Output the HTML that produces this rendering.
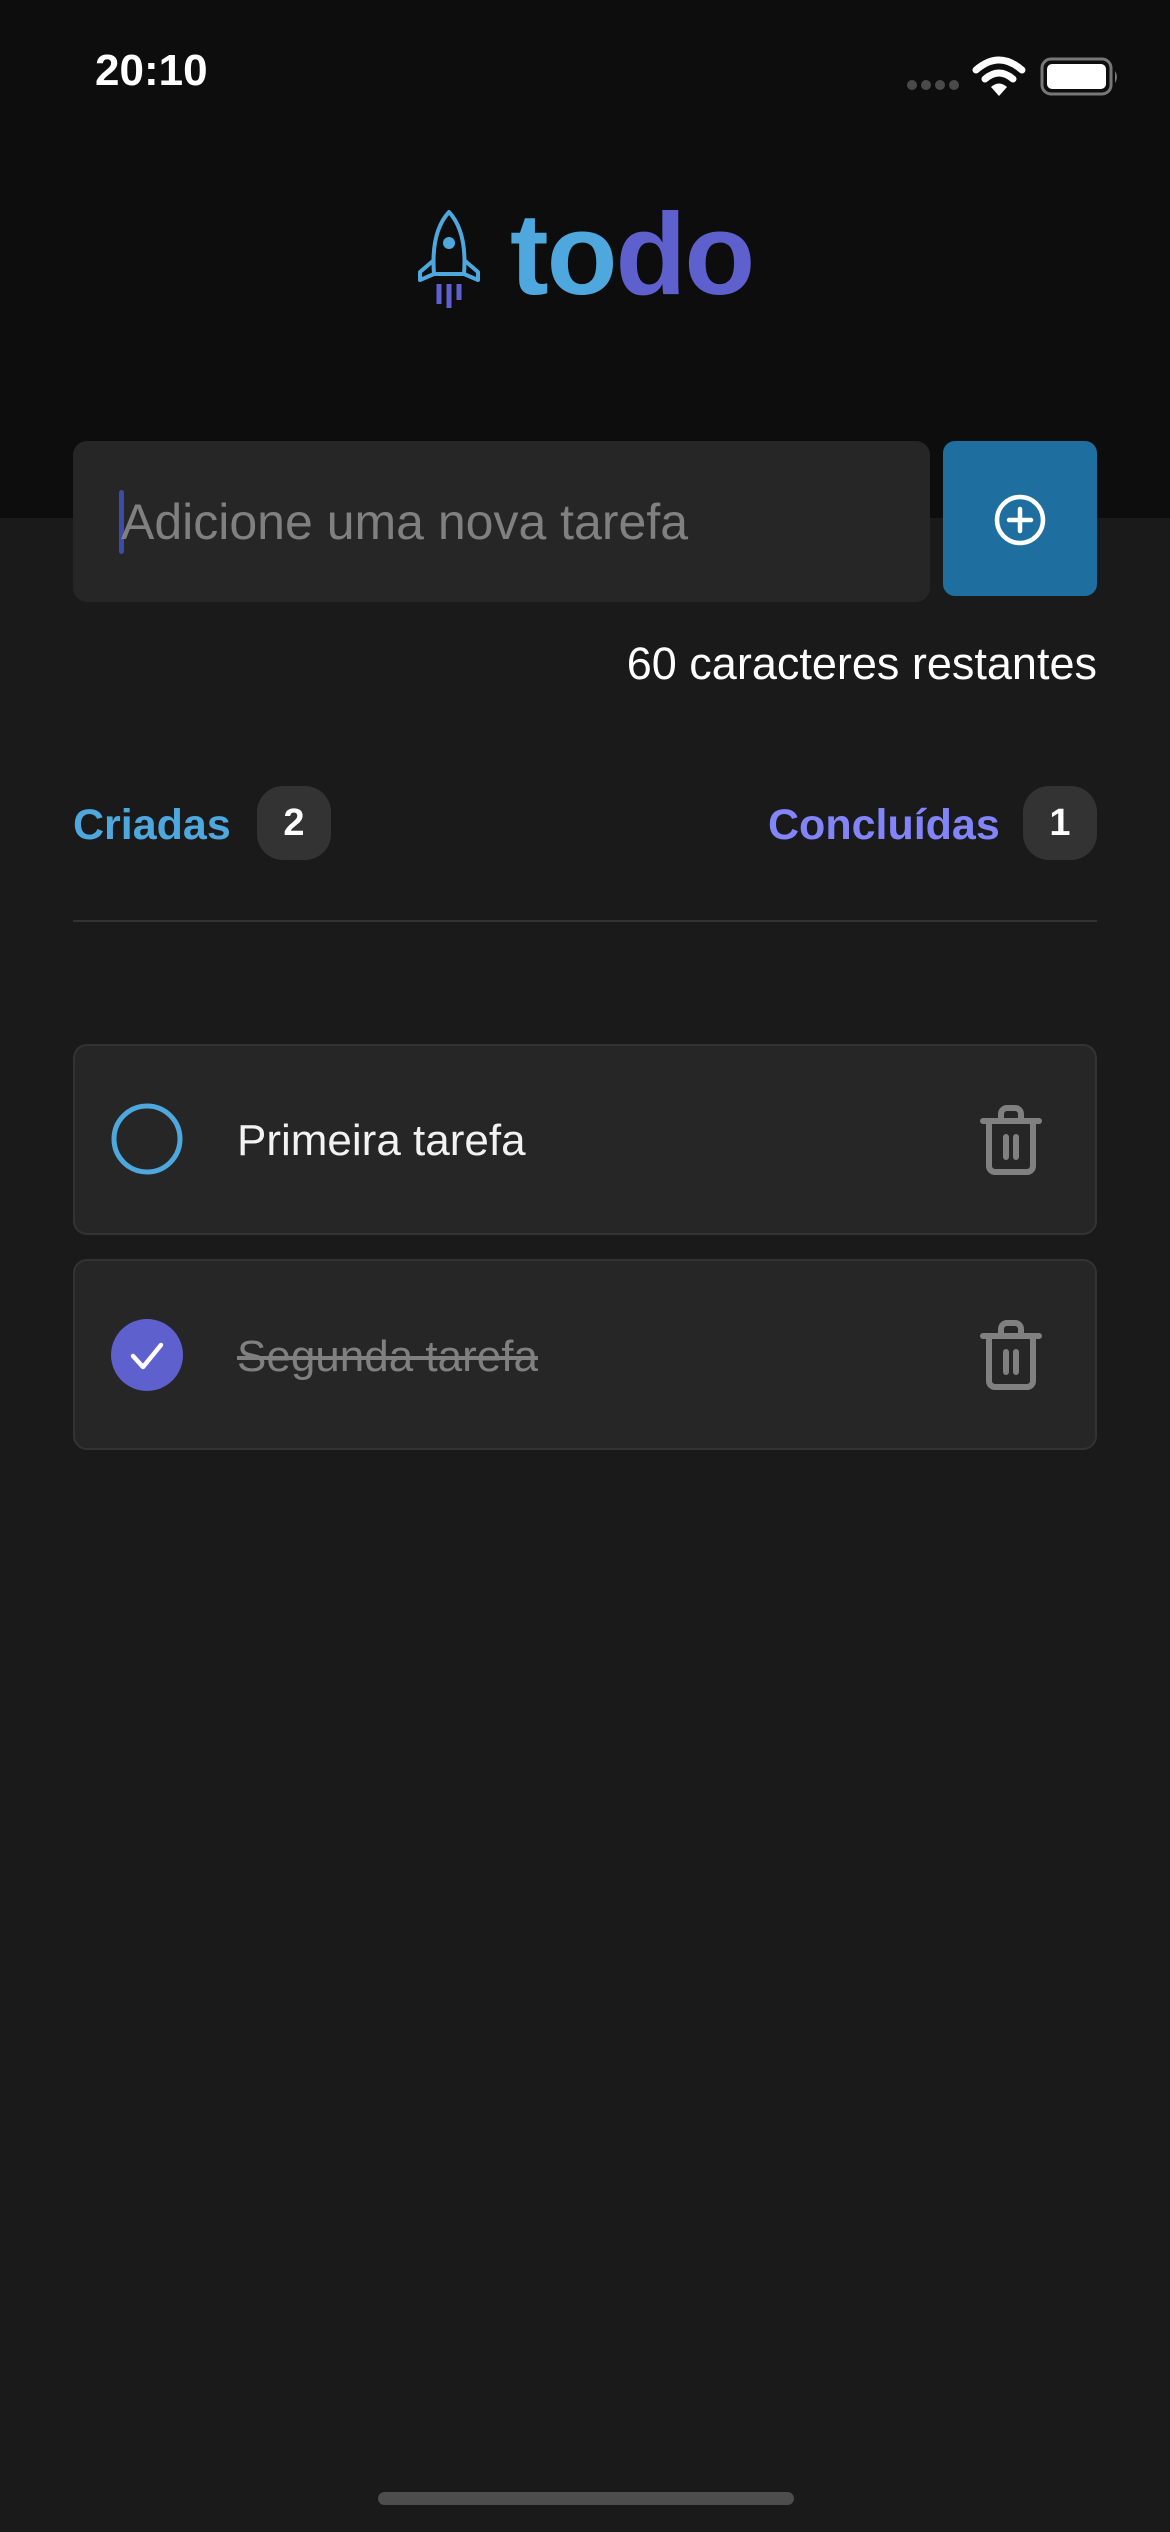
<!DOCTYPE html>
<html><head><meta charset="utf-8"><style>
*{margin:0;padding:0;box-sizing:border-box}
body{width:1170px;height:2532px;background:#1a1a1a;font-family:"Liberation Sans",sans-serif;position:relative;overflow:hidden;color:#f2f2f2}
.hdr{position:absolute;left:0;top:0;width:1170px;height:518px;background:#0d0d0d}
.abs{position:absolute}
.time{left:95px;top:46px;font-size:44px;font-weight:bold;color:#fff}
.input{left:73px;top:441px;width:857px;height:161px;background:#262626;border-radius:14px}
.ph{left:121px;top:493px;font-size:50px;color:#808080;white-space:nowrap}
.cursor{left:119px;top:490px;width:5px;height:64px;background:#3b4ba8;border-radius:3px}
.btn{left:943px;top:441px;width:154px;height:155px;background:#1e6f9f;border-radius:12px}
.rem{right:73px;top:638px;font-size:45px;color:#fff}
.lbl{font-size:43px;font-weight:bold;top:801px}
.badge{width:74px;height:74px;border-radius:26px;background:#333;top:786px;color:#fff;font-weight:bold;font-size:38px;text-align:center;line-height:74px}
.div{left:73px;top:920px;width:1024px;height:2px;background:#333}
.card{left:73px;width:1024px;height:191px;background:#262626;border:2px solid #333;border-radius:14px}
.txt{left:237px;font-size:44px;white-space:nowrap}
</style></head><body>
<div class="hdr"></div>
<div class="abs time">20:10</div>
<svg class="abs" style="left:905px;top:50px" width="215" height="50" viewBox="0 0 215 50">
<g fill="#4a4a4a"><circle cx="7" cy="35" r="5"/><circle cx="21" cy="35" r="5"/><circle cx="35" cy="35" r="5"/><circle cx="49" cy="35" r="5"/></g>
<g fill="none" stroke="#fff" stroke-width="7" stroke-linecap="round"><path d="M71 20 Q94 0 117 20"/><path d="M80 29 Q94 17 108 29"/></g>
<path d="M86 37 L94 46 L102 37 Q94 30 86 37Z" fill="#fff"/>
<rect x="137" y="9" width="69" height="35" rx="9" fill="none" stroke="#777" stroke-width="3"/>
<rect x="142" y="14" width="59" height="25" rx="5" fill="#fff"/>
<path d="M210 21 q4 6 0 12z" fill="#777"/>
</svg>
<svg class="abs" style="left:414px;top:208px" width="70" height="102" viewBox="0 0 70 102">
<g fill="none" stroke="#4ea8de" stroke-width="4" stroke-linejoin="round">
<path d="M35 4 C22 18 18 40 20 66 L50 66 C52 40 48 18 35 4Z"/>
<path d="M20 52 L6 64 L6 72 L20 66"/><path d="M50 52 L64 64 L64 72 L50 66"/>
</g>
<circle cx="35" cy="35" r="6" fill="#4ea8de"/>
<g stroke="#5e60ce" stroke-width="5"><path d="M25 76 V96"/><path d="M35 76 V100"/><path d="M45 76 V92"/></g>
</svg>
<div class="abs" style="left:510px;top:189px;font-size:116px;font-weight:bold;letter-spacing:-2px;line-height:130px"><span style="color:#4ea8de">to</span><span style="color:#5e60ce">do</span></div>
<div class="abs input"></div>
<div class="abs cursor"></div>
<div class="abs ph">Adicione uma nova tarefa</div>
<div class="abs btn"></div>
<svg class="abs" style="left:992px;top:492px" width="56" height="56" viewBox="0 0 56 56"><circle cx="28" cy="28" r="23" fill="none" stroke="#fff" stroke-width="4.5"/><path d="M28 17V39M17 28H39" stroke="#fff" stroke-width="4.5" stroke-linecap="round"/></svg>
<div class="abs rem">60 caracteres restantes</div>
<div class="abs lbl" style="left:73px;color:#4ea8de">Criadas</div>
<div class="abs badge" style="left:257px">2</div>
<div class="abs lbl" style="left:768px;color:#8284fa">Concluídas</div>
<div class="abs badge" style="left:1023px">1</div>
<div class="abs div"></div>
<div class="abs card" style="top:1044px"></div>
<svg class="abs" style="left:110px;top:1102px" width="74" height="74"><circle cx="37" cy="37" r="33" fill="none" stroke="#4ea8de" stroke-width="5"/></svg>
<div class="abs txt" style="top:1116px;color:#f2f2f2">Primeira tarefa</div>
<div class="abs card" style="top:1259px"></div>
<svg class="abs" style="left:110px;top:1318px" width="74" height="74"><circle cx="37" cy="37" r="36" fill="#5e60ce"/><path d="M23 38 L33 49 L51 27" fill="none" stroke="#fff" stroke-width="4.5" stroke-linecap="round" stroke-linejoin="round"/></svg>
<div class="abs txt" style="top:1332px;color:#808080;text-decoration:line-through">Segunda tarefa</div>
<svg class="abs" style="left:979px;top:1104px" width="64" height="72" viewBox="0 0 64 72"><g fill="none" stroke="#808080" stroke-width="6" stroke-linecap="round" stroke-linejoin="round"><path d="M4 17H60"/><path d="M22 17V10a6 6 0 0 1 6-6h8a6 6 0 0 1 6 6v7"/><path d="M10 17V62a6 6 0 0 0 6 6h32a6 6 0 0 0 6-6V17"/><path d="M27 33V53M37 33V53"/></g></svg>
<svg class="abs" style="left:979px;top:1319px" width="64" height="72" viewBox="0 0 64 72"><g fill="none" stroke="#808080" stroke-width="6" stroke-linecap="round" stroke-linejoin="round"><path d="M4 17H60"/><path d="M22 17V10a6 6 0 0 1 6-6h8a6 6 0 0 1 6 6v7"/><path d="M10 17V62a6 6 0 0 0 6 6h32a6 6 0 0 0 6-6V17"/><path d="M27 33V53M37 33V53"/></g></svg>
<div class="abs" style="left:378px;top:2492px;width:416px;height:13px;border-radius:7px;background:#4d4d4d"></div>
</body></html>
